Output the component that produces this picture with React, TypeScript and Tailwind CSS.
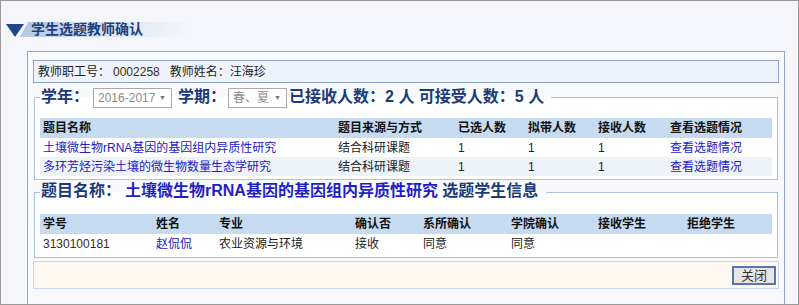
import React from 'react';

const font = { fontFamily: '"Liberation Sans", "Noto Sans CJK SC", sans-serif' };

const topics = [
  { name: '土壤微生物rRNA基因的基因组内异质性研究', source: '结合科研课题', chosen: '1', planned: '1', accepted: '1' },
  { name: '多环芳烃污染土壤的微生物数量生态学研究', source: '结合科研课题', chosen: '1', planned: '1', accepted: '1' },
];

function Select({ value, w }: { value: string; w: string }) {
  return (
    <span className={`inline-flex items-center justify-between h-[20px] ${w} border border-[#a9a9a9] bg-white pl-[4px] pr-[5px] text-[12px] leading-none font-normal whitespace-nowrap text-[#8a8a8a]`}>
      <span>{value}</span>
      <span className="text-[7px] text-[#777]">▼</span>
    </span>
  );
}

export default function App() {
  return (
    <div style={font} className="w-[799px] h-[305px] overflow-hidden border border-[#9a9a9a] bg-[#f4f6fb] flex flex-col text-[12px] text-[#222]">
      {/* header */}
      <div className="h-[50px] pt-[20px] pl-[5px] flex items-start shrink-0">
        <div className="relative flex items-center h-[16px]">
          <div className="absolute left-[18px] top-[1px] h-[15px] w-[168px] -skew-x-[30deg] bg-gradient-to-r from-[#b3c7e4] via-[#dbe5f2] to-transparent" />
          <svg width="18" height="14" viewBox="0 0 18 14" className="relative mt-[3px]">
            <polygon points="0,0 18,0 9,13" fill="#1d4787" />
          </svg>
          <span className="relative ml-[7px] text-[14px] leading-[16px] font-bold text-[#1f3f7d]">学生选题教师确认</span>
        </div>
      </div>

      {/* panel */}
      <div className="ml-[26px] mr-[13px] flex-1 border-l border-t border-r border-[#8fa7c9] bg-[#f8f9fd] px-[5px] pt-[8px]">
        <div className="h-[23px] border border-[#8da6c7] bg-[#eef2fa] flex items-center pl-[4px]">
          教师职工号：<span className="ml-[3px] text-[#3b2f1a]">0002258</span>
          <span className="ml-[10px]">教师姓名：汪海珍</span>
        </div>

        <fieldset className="mx-[1px] mt-[3px] border border-[#aac2e2] bg-white px-[5px] pb-[3px]">
          <legend className="px-[1px] flex items-center h-[22px] text-[16px] leading-[20px] font-bold text-[#1b3b78]">
            <span>学年：</span>
            <span className="ml-[4px]"><Select value="2016-2017" w="w-[79px]" /></span>
            <span className="ml-[6px]">学期：</span>
            <span className="ml-[2px]"><Select value="春、夏" w="w-[59px]" /></span>
            <span className="ml-[2px] pr-[6px] whitespace-nowrap">已接收人数：2 人 可接受人数：5 人</span>
          </legend>
          <div className="mt-[10px]">
            <div className="grid grid-cols-[295px_120px_70px_70px_72px_1fr] h-[20px] items-center bg-[#c6daf0] font-bold text-[#111]">
              <span className="pl-[3px]">题目名称</span>
              <span className="pl-[3px]">题目来源与方式</span>
              <span className="pl-[3px]">已选人数</span>
              <span className="pl-[3px]">拟带人数</span>
              <span className="pl-[3px]">接收人数</span>
              <span className="pl-[3px]">查看选题情况</span>
            </div>
            {topics.map((t, i) => (
              <div key={t.name} className={`grid grid-cols-[295px_120px_70px_70px_72px_1fr] h-[19px] items-center ${i % 2 ? 'bg-[#eef3fa]' : 'bg-white'}`}>
                <span className="pl-[3px] text-[#2121c4]">{t.name}</span>
                <span className="pl-[3px]">{t.source}</span>
                <span className="pl-[3px]">{t.chosen}</span>
                <span className="pl-[3px]">{t.planned}</span>
                <span className="pl-[3px]">{t.accepted}</span>
                <span className="pl-[3px] text-[#2121c4]">查看选题情况</span>
              </div>
            ))}
          </div>
        </fieldset>

        <fieldset className="mx-[1px] mt-[1px] border border-[#aac2e2] bg-white px-[5px] pb-[4px]">
          <legend className="px-[1px] pr-[8px] h-[22px] text-[16px] leading-[20px] font-bold text-[#1b3b78] whitespace-nowrap">
            题目名称：<span className="ml-[4px] text-[#1f1fc8]">土壤微生物rRNA基因的基因组内异质性研究</span> 选题学生信息
          </legend>
          <div className="mt-[11px]">
            <div className="grid grid-cols-[113px_63px_136px_68px_88px_87px_89px_1fr] h-[20px] items-center bg-[#c6daf0] font-bold text-[#111]">
              <span className="pl-[3px]">学号</span>
              <span className="pl-[3px]">姓名</span>
              <span className="pl-[3px]">专业</span>
              <span className="pl-[3px]">确认否</span>
              <span className="pl-[3px]">系所确认</span>
              <span className="pl-[3px]">学院确认</span>
              <span className="pl-[3px]">接收学生</span>
              <span className="pl-[3px]">拒绝学生</span>
            </div>
            <div className="grid grid-cols-[113px_63px_136px_68px_88px_87px_89px_1fr] h-[19px] items-center bg-white">
              <span className="pl-[3px] text-[#3a2c20]">3130100181</span>
              <span className="pl-[3px] text-[#2121c4]">赵侃侃</span>
              <span className="pl-[3px]">农业资源与环境</span>
              <span className="pl-[3px]">接收</span>
              <span className="pl-[3px]">同意</span>
              <span className="pl-[3px]">同意</span>
              <span className="pl-[3px]"></span>
              <span className="pl-[3px]"></span>
            </div>
          </div>
        </fieldset>

        <div className="mt-[3px] h-[28px] border border-[#c6d7ee] bg-[#fdf9f0] flex items-center justify-end pr-[2px]">
          <button className="h-[19px] w-[44px] border-2 border-[#5a75ad] bg-[#e6e6e6] text-[13px] text-[#333] leading-none">关闭</button>
        </div>
      </div>
    </div>
  );
}
